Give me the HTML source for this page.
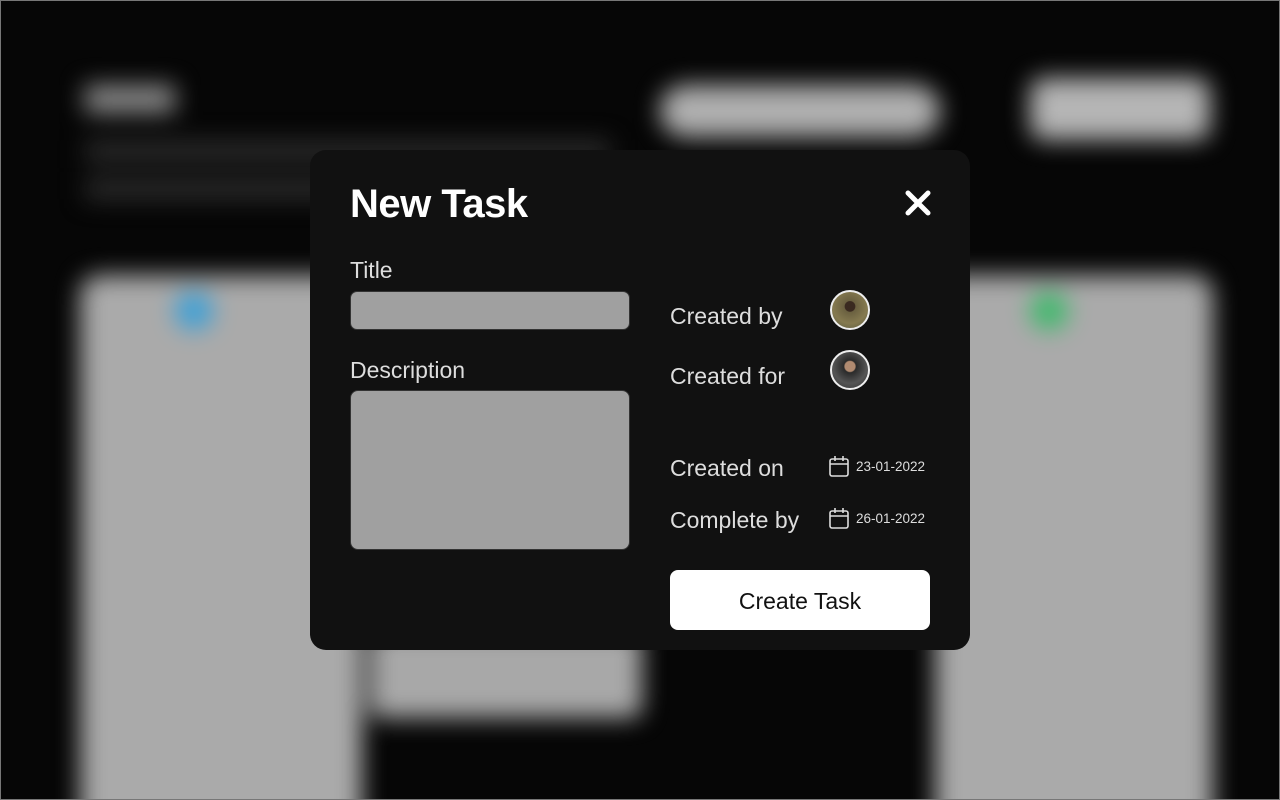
<!DOCTYPE html>
<html><head><meta charset="utf-8"><style>
*{margin:0;padding:0;box-sizing:border-box}
html,body{width:1280px;height:800px;overflow:hidden;background:#060606;font-family:"Liberation Sans",sans-serif}
.wrap{position:absolute;left:0;top:0;width:1280px;height:800px;overflow:hidden}
.frame{position:absolute;left:0;top:0;width:1280px;height:800px;border:1px solid #777;pointer-events:none;z-index:5}
.bg{position:absolute;left:0;top:0;width:1280px;height:800px;filter:blur(12px)}
.b{position:absolute}
.modal{position:absolute;left:310px;top:150px;width:660px;height:500px;background:#111;border-radius:16px;color:#ddd}
.m{position:absolute}
.lbl{font-size:23px;color:#ddd}
.av{width:40px;height:40px;border-radius:50%;border:2px solid #eee;overflow:hidden}
.date{font-size:13.5px;color:#ddd}
</style></head><body>
<div class="wrap">
<div class="bg">
 <div class="b" style="left:85px;top:85px;width:90px;height:28px;background:#888"></div>
 <div class="b" style="left:85px;top:140px;width:525px;height:22px;background:#2a2a2a"></div>
 <div class="b" style="left:85px;top:178px;width:300px;height:22px;background:#2a2a2a"></div>
 <div class="b" style="left:660px;top:85px;width:280px;height:52px;background:#b0b0b0;border-radius:26px"></div>
 <div class="b" style="left:1030px;top:78px;width:180px;height:62px;background:#b5b5b5;border-radius:14px"></div>
 <div class="b" style="left:80px;top:275px;width:282px;height:560px;background:#aaa;border-radius:20px"></div>
 <div class="b" style="left:175px;top:292px;width:38px;height:38px;background:#3aa0d8;border-radius:50%"></div>
 <div class="b" style="left:935px;top:275px;width:278px;height:560px;background:#aaa;border-radius:20px"></div>
 <div class="b" style="left:1030px;top:292px;width:38px;height:38px;background:#3cba6a;border-radius:50%"></div>
 <div class="b" style="left:370px;top:630px;width:272px;height:88px;background:#a8a8a8;border-radius:12px"></div>
</div>
<div class="frame"></div>
<div class="modal">
 <div class="m" style="left:40px;top:32px;font-size:40px;font-weight:bold;color:#fff;letter-spacing:-0.5px">New Task</div>
 <svg class="m" style="left:594px;top:39px" width="28" height="28" viewBox="0 0 28 28"><path d="M4 4L24 24M24 4L4 24" stroke="#fff" stroke-width="5" stroke-linecap="round"/></svg>
 <div class="m lbl" style="left:40px;top:107px">Title</div>
 <div class="m" style="left:40px;top:141px;width:280px;height:39px;background:#a0a0a0;border-radius:7px;border:1px solid #333"></div>
 <div class="m lbl" style="left:40px;top:207px">Description</div>
 <div class="m" style="left:40px;top:240px;width:280px;height:160px;background:#a0a0a0;border-radius:8px;border:1px solid #333"></div>
 <div class="m lbl" style="left:360px;top:153px">Created by</div>
 <div class="m lbl" style="left:360px;top:213px">Created for</div>
 <div class="m lbl" style="left:360px;top:305px">Created on</div>
 <div class="m lbl" style="left:360px;top:357px">Complete by</div>
 <div class="m av" style="left:520px;top:140px;background:radial-gradient(circle at 50% 40%,#3a2a20 0 18%,#6a6040 20%,#857a50 60%,#5a5a40)"></div>
 <div class="m av" style="left:520px;top:200px;background:radial-gradient(circle at 50% 40%,#b08a70 0 18%,#2a2a2a 22%,#555 60%,#333)"></div>
 <svg class="m" style="left:519px;top:305px" width="20" height="22" viewBox="0 0 20 22"><rect x="1" y="4" width="18" height="17" rx="2" fill="none" stroke="#ddd" stroke-width="1.6"/><path d="M1 9H19M6 1V6M14 1V6" stroke="#ddd" stroke-width="1.6"/></svg>
 <div class="m date" style="left:546px;top:309px">23-01-2022</div>
 <svg class="m" style="left:519px;top:357px" width="20" height="22" viewBox="0 0 20 22"><rect x="1" y="4" width="18" height="17" rx="2" fill="none" stroke="#ddd" stroke-width="1.6"/><path d="M1 9H19M6 1V6M14 1V6" stroke="#ddd" stroke-width="1.6"/></svg>
 <div class="m date" style="left:546px;top:361px">26-01-2022</div>
 <div class="m" style="left:360px;top:420px;width:260px;height:60px;background:#fff;border-radius:8px;color:#111;font-size:23px;text-align:center;line-height:62px">Create Task</div>
</div>
</div>
</body></html>
